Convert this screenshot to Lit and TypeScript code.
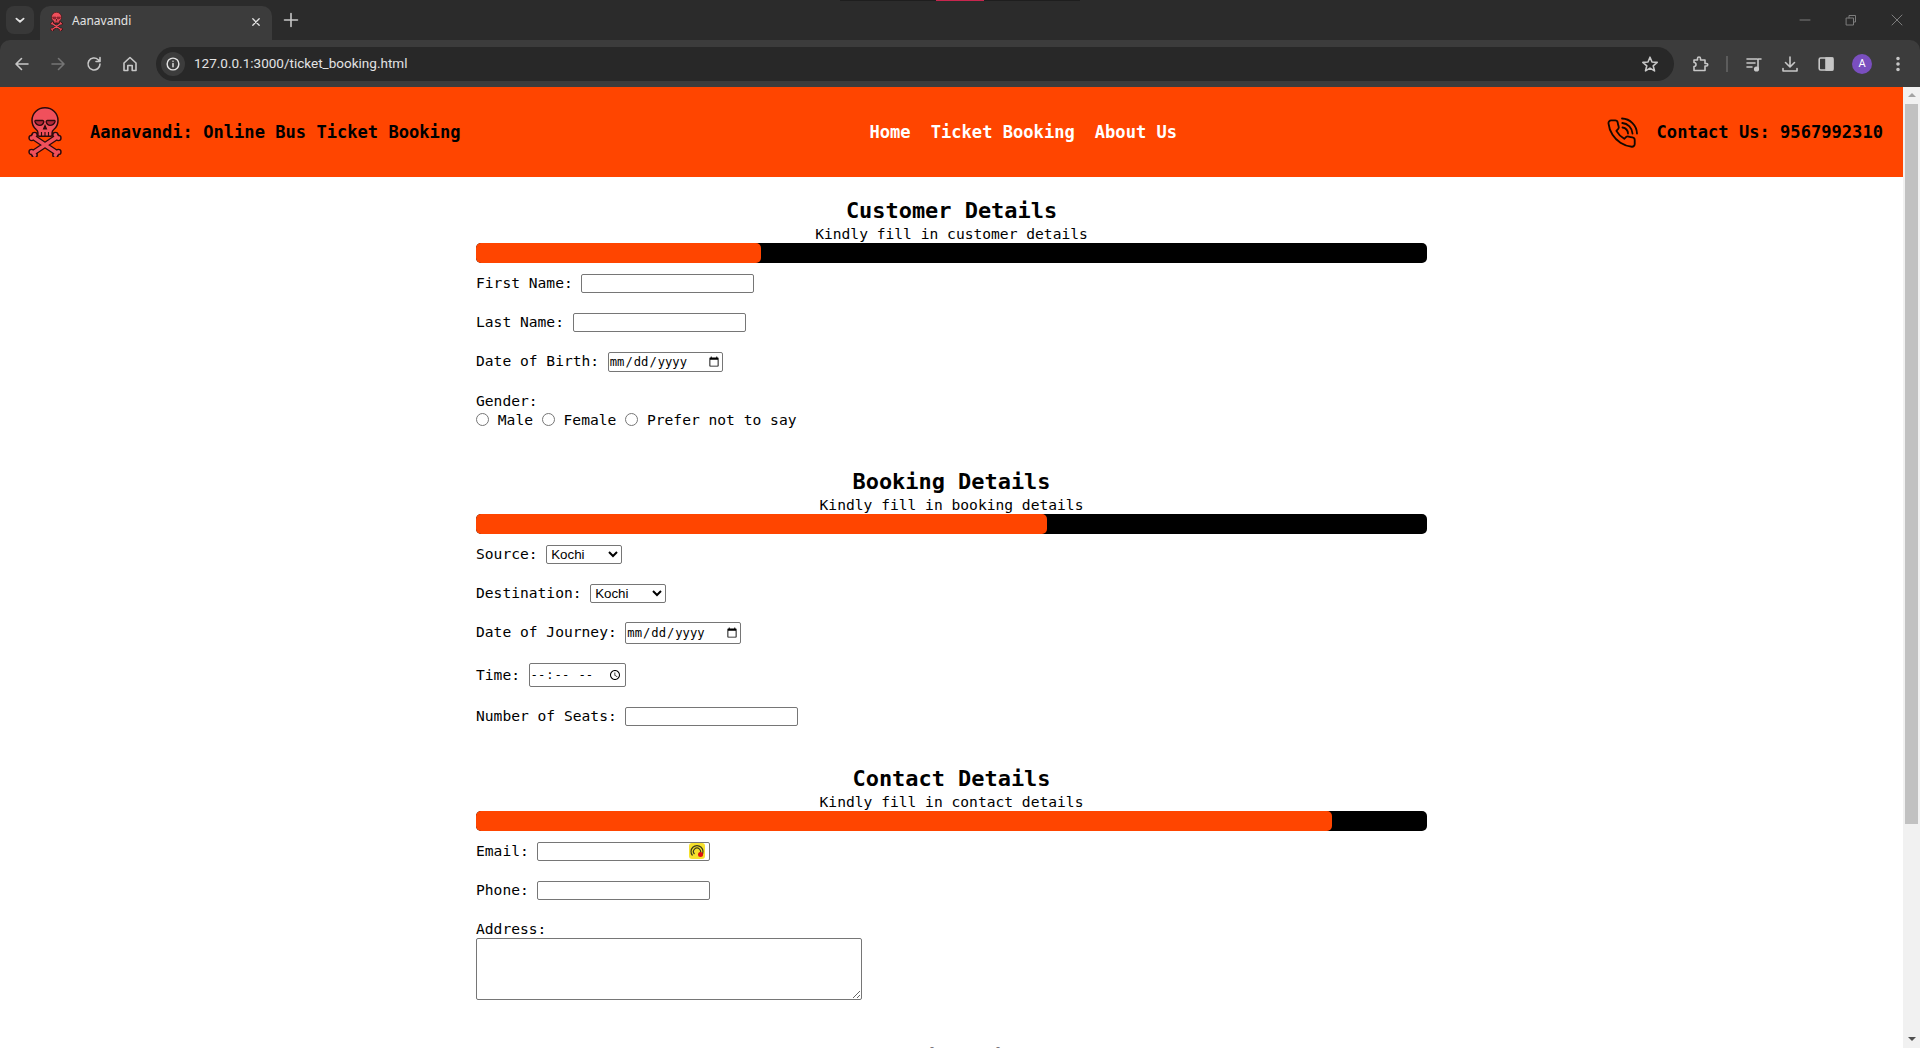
import { LitElement, html, svg, css } from "lit";
import { customElement } from "lit/decorators.js";

const skull = (w: number, h: number) => html`
  <svg width=${w} height=${h} viewBox="0 0 34 50">
    ${svg`
      <g stroke-linecap="round">
        <path d="M5 30 29 46M29 30 5 46" stroke="#2a0a0c" stroke-width="6" />
        <g fill="#f0505c" stroke="#2a0a0c" stroke-width="1.4">
          <circle cx="3.6" cy="31" r="2.6" /><circle cx="6.6" cy="28" r="2.6" />
          <circle cx="30.4" cy="31" r="2.6" /><circle cx="27.4" cy="28" r="2.6" />
          <circle cx="3.6" cy="45" r="2.6" /><circle cx="6.6" cy="48" r="2.6" />
          <circle cx="30.4" cy="45" r="2.6" /><circle cx="27.4" cy="48" r="2.6" />
        </g>
        <path d="M5 30 29 46M29 30 5 46" stroke="#f0505c" stroke-width="3.4" />
      </g>
      <path d="M17 .8C9.5.8 4 6.3 4 13.5c0 3.8 1.5 6.8 4.2 9 1.3 1 1.7 1.8 1.7 3.2v2.2c0 .9.6 1.3 1.4 1.3h11.4c.8 0 1.4-.4 1.4-1.3v-2.2c0-1.4.4-2.2 1.7-3.2 2.7-2.2 4.2-5.2 4.2-9C30 6.3 24.5.8 17 .8z"
        fill="#f0505c" stroke="#2a0a0c" stroke-width="1.5" />
      <path d="M7.5 13.5h7c1 0 1.5.8 1.2 1.8-.5 1.8-1.8 3-3.7 3-2.4 0-4.3-1.6-5-3.5-.2-.7 0-1.3.5-1.3zM26.5 13.5h-7c-1 0-1.5.8-1.2 1.8.5 1.8 1.8 3 3.7 3 2.4 0 4.3-1.6 5-3.5.2-.7 0-1.3-.5-1.3z"
        fill="#b5283a" stroke="#2a0a0c" stroke-width="1.3" />
      <path d="M17 18.5 15.5 22h3zM13.5 25v4M17 25v4M20.5 25v4" fill="#2a0a0c" stroke="#2a0a0c" stroke-width="1.1" />
    `}
  </svg>
`;

const phone = html`
  <svg width="31" height="31" viewBox="0 0 31 31" fill="none" stroke="#140800" stroke-width="1.8" stroke-linecap="round" stroke-linejoin="round">
    ${svg`
      <g transform="scale(1.32) translate(-1 0.6)">
        <path stroke-width="1.4" d="M22 16.92v3a2 2 0 0 1-2.18 2 19.79 19.79 0 0 1-8.63-3.07 19.5 19.5 0 0 1-6-6 19.79 19.79 0 0 1-3.07-8.67A2 2 0 0 1 4.11 2h3a2 2 0 0 1 2 1.72 12.84 12.84 0 0 0 .7 2.81 2 2 0 0 1-.45 2.11L8.09 9.91a16 16 0 0 0 6 6l1.27-1.27a2 2 0 0 1 2.11-.45 12.84 12.84 0 0 0 2.81.7A2 2 0 0 1 22 16.92z" />
      </g>
      <path d="M15.5 10.5A6.5 6.5 0 0 1 21 16.5M15.3 6A11 11 0 0 1 25.5 16.5M15 1.5A15.5 15.5 0 0 1 30 16.5" />
    `}
  </svg>
`;

const icon = (body: unknown, color = "#c7c7c7", w = 20) => html`
  <svg width=${w} height=${w} viewBox="0 0 20 20" fill="none" stroke=${color} stroke-width="1.6" stroke-linecap="round" stroke-linejoin="round">${body}</svg>
`;

@customElement("app-root")
export class AppRoot extends LitElement {
  static styles = css`
    :host {
      display: flex;
      flex-direction: column;
      width: 1920px;
      height: 1048px;
      overflow: hidden;
      position: relative;
      background: #2b2b2b;
      color: #000;
      font-family: "DejaVu Sans Mono", monospace;
      font-size: 14.62px;
      line-height: 19px;
    }

    * {
      margin: 0;
      padding: 0;
      box-sizing: border-box;
    }

    /* browser frame */
    .tabstrip {
      display: flex;
      height: 40px;
      flex: none;
      background: #2b2b2b;
      color: #e3e3e3;
      font-family: "Noto Sans", sans-serif;
    }

    .marker {
      position: absolute;
      left: 840px;
      top: 0;
      width: 240px;
      height: 1px;
      background: #1e1e1e;
    }

    .marker i {
      display: block;
      width: 48px;
      height: 1px;
      margin-left: 96px;
      background: #c8264e;
    }

    .tabs-btn {
      display: flex;
      align-items: center;
      justify-content: center;
      width: 28px;
      height: 28px;
      margin: 6px 0 0 6px;
      border-radius: 8px;
      background: #383838;
    }

    .tab {
      display: flex;
      align-items: center;
      width: 232px;
      height: 34px;
      margin: 6px 0 0 6px;
      padding: 0 8px 2px 10px;
      border-radius: 10px 10px 0 0;
      background: #3c3c3c;
      font-size: 12px;
      line-height: 16px;
    }

    .tab .fav {
      display: flex;
      width: 22px;
      margin-top: -2px;
    }

    .tab span {
      flex: 1;
      margin-top: -2px;
    }

    .newtab {
      display: flex;
      margin: 10px 0 0 9px;
      height: 20px;
    }

    .winctl {
      display: flex;
      margin-left: auto;
    }

    .winctl div {
      display: flex;
      align-items: center;
      justify-content: center;
      width: 46px;
      height: 40px;
    }

    .toolbar {
      display: flex;
      align-items: center;
      flex: none;
      height: 47px;
      padding: 0 4px;
      background: #3c3c3c;
      border-radius: 10px 10px 0 0;
    }

    .tb {
      display: flex;
      align-items: center;
      justify-content: center;
      flex: none;
      width: 36px;
      height: 36px;
    }

    .omnibox {
      display: flex;
      align-items: center;
      flex: 1;
      height: 34px;
      margin: 0 8px;
      padding: 0 14px 0 5px;
      border-radius: 17px;
      background: #282828;
      color: #e3e3e3;
      font-family: "Roboto", sans-serif;
      font-size: 13.53px;
    }

    .info {
      display: flex;
      align-items: center;
      justify-content: center;
      width: 24px;
      height: 24px;
      margin-right: 9px;
      border-radius: 50%;
      background: #3c3c3c;
    }

    .omnibox span {
      flex: 1;
    }

    .sep {
      flex: none;
      width: 2px;
      height: 16px;
      margin: 0 8px;
      background: #5c5c5c;
    }

    .avatar {
      display: flex;
      align-items: center;
      justify-content: center;
      width: 20px;
      height: 20px;
      border-radius: 50%;
      background: #7a4fbf;
      color: #fff;
      font-family: "Roboto", sans-serif;
      font-size: 11px;
    }

    /* page viewport */
    .viewport {
      display: flex;
      flex: 1;
      min-height: 0;
      background: #fff;
    }

    .page {
      flex: 1;
      min-width: 0;
      overflow: hidden;
    }

    .scrollbar {
      display: flex;
      flex-direction: column;
      align-items: center;
      flex: none;
      width: 17px;
      background: #f1f1f1;
    }

    .arrow {
      flex: none;
      width: 0;
      height: 0;
      border-left: 4px solid transparent;
      border-right: 4px solid transparent;
    }

    .arrow.up {
      margin-top: 6px;
      border-bottom: 4px solid #a3a3a3;
    }

    .thumb {
      flex: none;
      width: 13px;
      height: 720px;
      margin-top: 7px;
      background: #c1c1c1;
    }

    .arrow.down {
      margin-top: auto;
      margin-bottom: 7px;
      border-top: 4px solid #505050;
    }

    /* site header */
    header {
      display: flex;
      align-items: center;
      height: 90px;
      padding: 0 20px 0 28px;
      background: #ff4500;
      font-size: 17.1px;
      font-weight: 700;
    }

    .brand {
      display: flex;
      align-items: center;
      gap: 28px;
    }

    nav {
      display: flex;
      gap: 20px;
      margin-left: 409px;
      color: #fff;
    }

    .contact {
      display: flex;
      align-items: center;
      gap: 19px;
      margin-left: auto;
    }

    /* form */
    main {
      width: 951px;
      margin: 0 auto;
      padding-top: 19px;
    }

    section + section {
      margin-top: 37px;
    }

    section.contact-details {
      margin-top: 38px;
    }

    section.last {
      margin-top: 43px;
    }

    h2 {
      height: 28px;
      font-size: 21.93px;
      line-height: 30px;
      font-weight: 700;
      text-align: center;
    }

    .hint {
      text-align: center;
    }

    .bar {
      height: 20px;
      border-radius: 5px;
      background: #000;
    }

    .fill {
      height: 100%;
      border-radius: 5px;
      background: #ff4500;
    }

    .fields {
      display: flex;
      flex-direction: column;
      gap: 20px;
      padding-top: 11px;
    }

    .row {
      display: flex;
      align-items: center;
      gap: 8.6px;
      height: 19px;
    }

    .row label {
      margin-top: -2px;
    }

    .row.date {
      height: 20px;
    }

    .row.date label {
      margin-top: -4px;
    }

    .row.date-tall {
      height: 22px;
      margin-top: -1px;
    }

    .row.date-tall label {
      margin-top: -4px;
    }

    .row.time {
      height: 24px;
      margin-top: -1px;
    }

    .gender .row {
      gap: 8.8px;
    }

    .gender > div:first-child {
      margin-top: -1px;
      margin-bottom: 1px;
    }

    input,
    select,
    textarea {
      display: block;
      background: #fff;
      color: #000;
      border: 1px solid #767676;
      border-radius: 2px;
      font-family: "DejaVu Sans Mono", monospace;
      font-size: 12.18px;
    }

    input.text {
      width: 173px;
      height: 19px;
    }

    input.date {
      width: 115px;
      height: 100%;
    }

    .date-tall input.date {
      width: 116px;
    }

    input.clock {
      width: 97px;
      height: 100%;
    }

    select {
      width: 76px;
      height: 19px;
      font-family: "Liberation Sans", sans-serif;
      font-size: 13.33px;
    }

    input[type="radio"] {
      width: 13px;
      height: 13px;
      margin-top: -2px;
    }

    .field-wrap {
      position: relative;
      display: block;
    }

    .grab {
      position: absolute;
      right: 5px;
      top: 1px;
      width: 16px;
      height: 16px;
      border-radius: 3px;
      background: #f6e12e;
    }

    .grab svg {
      display: block;
    }

    .address label {
      display: block;
      height: 18px;
      margin-top: -1px;
      margin-bottom: 1px;
    }

    textarea {
      width: 386px;
      height: 62px;
    }
  `;

  private renderBar(percent: number) {
    return html`<div class="bar"><div class="fill" style="width:${percent}%"></div></div>`;
  }

  private renderBrowser() {
    return html`
      <div class="marker"><i></i></div>
      <div class="tabstrip">
        <div class="tabs-btn">${icon(svg`<path d="M6 8.5 10 12l4-3.5" stroke-width="2" />`, "#e3e3e3", 18)}</div>
        <div class="tab">
          <div class="fav">${skull(13, 19)}</div>
          <span>Aanavandi</span>
          ${icon(svg`<path d="M6 6 14 14M14 6 6 14" />`, "#e3e3e3", 16)}
        </div>
        <div class="newtab">${icon(svg`<path d="M10 3.5v13M3.5 10h13" />`, "#c7c7c7", 20)}</div>
        <div class="winctl">
          <div>${icon(svg`<path d="M5 10h10" stroke-width="1" />`, "#7d7d7d", 20)}</div>
          <div>${icon(svg`<path d="M5.5 8h7v7h-7zM8 8V5.5h6.5V12H12.5" stroke-width="1" />`, "#7d7d7d", 20)}</div>
          <div>${icon(svg`<path d="M5 5 15 15M15 5 5 15" stroke-width="1" />`, "#7d7d7d", 20)}</div>
        </div>
      </div>
      <div class="toolbar">
        <div class="tb">${icon(svg`<path d="M16 10H4.5M9.5 4.5 4 10l5.5 5.5" />`)}</div>
        <div class="tb">${icon(svg`<path d="M4 10h11.5M10.5 4.5 16 10l-5.5 5.5" />`, "#757575")}</div>
        <div class="tb">${icon(svg`<path d="M16 10a6 6 0 1 1-1.8-4.3L16 7.5M16 3.5v4h-4" />`)}</div>
        <div class="tb">${icon(svg`<path d="M4 9 10 3.5 16 9v7.5h-3.8v-5H7.8v5H4z" />`)}</div>
        <div class="omnibox">
          <div class="info">${icon(svg`<circle cx="10" cy="10" r="6.5" /><path d="M10 9.5v3.5M10 6.8v.2" />`, "#e3e3e3", 18)}</div>
          <span>127.0.0.1:3000/ticket_booking.html</span>
          ${icon(svg`<path d="M10 3.2 12 8l5.2.4-4 3.4 1.3 5.1L10 14.1l-4.5 2.8 1.3-5.1-4-3.4L8 8z" />`, "#c7c7c7")}
        </div>
        <div class="tb">${icon(svg`<path d="M4 6h3.5V4.5a1.5 1.5 0 0 1 3 0V6H15v3.5h1.5a1.2 1.2 0 0 1 0 2.5H15v4.500H4V12.500a2 2 0 0 0 0-4z" />`)}</div>
        <div class="sep"></div>
        <div class="tb">${icon(svg`<path d="M3 5h10M3 9h8M3 13h5M14 15V5h3" /><circle cx="12.5" cy="15" r="1.8" fill="#c7c7c7" />`)}</div>
        <div class="tb">${icon(svg`<path d="M10 3v9.5M5.5 8.5 10 13l4.5-4.5M3 14.5V17h14v-2.5" />`)}</div>
        <div class="tb">${icon(svg`<rect x="3.2" y="4" width="13.6" height="12" rx="1.5" /><rect x="10" y="4" width="6.8" height="12" fill="#c7c7c7" />`)}</div>
        <div class="tb"><div class="avatar">A</div></div>
        <div class="tb">${icon(svg`<circle cx="10" cy="4.5" r="1" fill="#c7c7c7" /><circle cx="10" cy="10" r="1" fill="#c7c7c7" /><circle cx="10" cy="15.5" r="1" fill="#c7c7c7" />`)}</div>
      </div>
    `;
  }

  private renderCustomer() {
    return html`
      <section>
        <h2>Customer Details</h2>
        <p class="hint">Kindly fill in customer details</p>
        ${this.renderBar(30)}
        <div class="fields">
          <div class="row"><label>First Name:</label><input class="text" type="text" /></div>
          <div class="row"><label>Last Name:</label><input class="text" type="text" /></div>
          <div class="row date"><label>Date of Birth:</label><input class="date" type="date" /></div>
          <div class="gender">
            <div>Gender:</div>
            <div class="row">
              <input type="radio" name="gender" /><label>Male</label>
              <input type="radio" name="gender" /><label>Female</label>
              <input type="radio" name="gender" /><label>Prefer not to say</label>
            </div>
          </div>
        </div>
      </section>
    `;
  }

  private renderBooking() {
    return html`
      <section>
        <h2>Booking Details</h2>
        <p class="hint">Kindly fill in booking details</p>
        ${this.renderBar(60)}
        <div class="fields">
          <div class="row"><label>Source:</label><select><option>Kochi</option></select></div>
          <div class="row"><label>Destination:</label><select><option>Kochi</option></select></div>
          <div class="row date-tall"><label>Date of Journey:</label><input class="date" type="date" /></div>
          <div class="row time"><label>Time:</label><input class="clock" type="time" /></div>
          <div class="row"><label>Number of Seats:</label><input class="text" type="number" /></div>
        </div>
      </section>
    `;
  }

  private renderContact() {
    return html`
      <section class="contact-details">
        <h2>Contact Details</h2>
        <p class="hint">Kindly fill in contact details</p>
        ${this.renderBar(90)}
        <div class="fields">
          <div class="row">
            <label>Email:</label>
            <div class="field-wrap">
              <input class="text" type="email" />
              <div class="grab">
                <svg width="16" height="16" viewBox="0 0 16 16" fill="none" stroke="#3a3a1e" stroke-width="1.2">
                  ${svg`
                    <path d="M3.5 12.5a6 6 0 1 1 9 0" />
                    <path d="M5.5 11a3.5 3.5 0 1 1 5 0" />
                    <circle cx="11.5" cy="11.5" r="2.5" fill="#e01010" stroke="none" />
                  `}
                </svg>
              </div>
            </div>
          </div>
          <div class="row"><label>Phone:</label><input class="text" type="tel" /></div>
          <div class="address">
            <label>Address:</label>
            <textarea></textarea>
          </div>
        </div>
      </section>
    `;
  }

  render() {
    return html`
      ${this.renderBrowser()}
      <div class="viewport">
        <div class="page">
          <header>
            <div class="brand">${skull(34, 50)}<span>Aanavandi: Online Bus Ticket Booking</span></div>
            <nav><span>Home</span><span>Ticket Booking</span><span>About Us</span></nav>
            <div class="contact">${phone}<span>Contact Us: 9567992310</span></div>
          </header>
          <main>
            ${this.renderCustomer()} ${this.renderBooking()} ${this.renderContact()}
            <section class="last"><h2>Confirmation</h2></section>
          </main>
        </div>
        <div class="scrollbar">
          <div class="arrow up"></div>
          <div class="thumb"></div>
          <div class="arrow down"></div>
        </div>
      </div>
    `;
  }
}

declare global {
  interface HTMLElementTagNameMap {
    "app-root": AppRoot;
  }
}
